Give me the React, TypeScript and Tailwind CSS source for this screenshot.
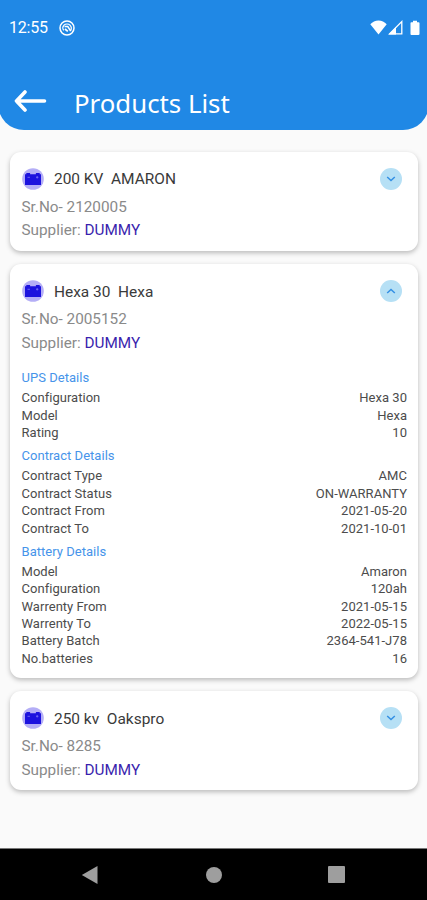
import { useState } from "react"
import clsx from "clsx"

interface Section {
  title: string
  rows: [string, string][]
}

interface Product {
  name: string
  serial: string
  supplier: string
  sections?: Section[]
}

const products: Product[] = [
  { name: "200 KV  AMARON", serial: "2120005", supplier: "DUMMY" },
  {
    name: "Hexa 30  Hexa",
    serial: "2005152",
    supplier: "DUMMY",
    sections: [
      {
        title: "UPS Details",
        rows: [
          ["Configuration", "Hexa 30"],
          ["Model", "Hexa"],
          ["Rating", "10"],
        ],
      },
      {
        title: "Contract Details",
        rows: [
          ["Contract Type", "AMC"],
          ["Contract Status", "ON-WARRANTY"],
          ["Contract From", "2021-05-20"],
          ["Contract To", "2021-10-01"],
        ],
      },
      {
        title: "Battery Details",
        rows: [
          ["Model", "Amaron"],
          ["Configuration", "120ah"],
          ["Warrenty From", "2021-05-15"],
          ["Warrenty To", "2022-05-15"],
          ["Battery Batch", "2364-541-J78"],
          ["No.batteries", "16"],
        ],
      },
    ],
  },
  { name: "250 kv  Oakspro", serial: "8285", supplier: "DUMMY" },
]

function StatusBar() {
  return (
    <div className="flex h-[55px] items-center pl-[9px] pr-[7px] text-white">
      <span className="pt-px text-[16px] tracking-[-0.2px]">12:55</span>
      <svg className="ml-[11px]" width="16" height="16" viewBox="0 0 16 16" fill="none" stroke="currentColor">
        <circle cx="8" cy="8" r="7" strokeWidth="1.5" />
        <path d="M4.700 10.300A4 4 0 0 1 5 5.200C6.500 3.600 9.500 3.600 11 5.200s1.500 4 .5 5.600" strokeWidth="1.2" />
        <path d="M5.600 6.600h3.200l2.900 4.600" strokeWidth="1.5" />
        <path d="M6 9l2.800 2.400" strokeWidth="1.700" />
      </svg>
      <svg className="ml-auto" width="17" height="15" viewBox="0 0 17 15" fill="currentColor">
        <path d="M8.5 14.5L.3 4.3C2.5 2 5.3.6 8.5.6s6 1.4 8.2 3.7z" />
      </svg>
      <svg className="ml-px" width="15" height="15" viewBox="0 0 15 15">
        <path d="M13.8 1.6v12.2H1.6z" fill="none" stroke="currentColor" strokeWidth="1.3" />
        <path d="M8 7v7.400H.6z" fill="currentColor" />
      </svg>
      <svg className="ml-[7px]" width="10" height="16" viewBox="0 0 10 16" fill="currentColor">
        <path d="M3 .8h4v1.4h1.6c.5 0 .9.4.9.9V14c0 .5-.4.9-.9.9H1.4a.9.9 0 0 1-.9-.9V3.100c0-.5.4-.9.9-.9H3z" />
      </svg>
    </div>
  )
}

function BatteryIcon() {
  return (
    <svg width="22" height="22" viewBox="0 0 22 22" className="shrink-0">
      <circle cx="11" cy="11" r="10.8" fill="#b4aef6" />
      <path d="M4.300 5h3.800v1.300h5.800V5h3.800v1.300h1.300v10.700H3V6.300h1.300z" fill="#1c12de" />
      <path d="M5.500 9.300h2.400M14 9.300h2.400M15.200 8.100v2.400" stroke="#7f78f2" strokeWidth="0.8" />
    </svg>
  )
}

function ProductCard({ product }: { product: Product }) {
  const [open, setOpen] = useState(!!product.sections)

  return (
    <div
      className={clsx(
        "rounded-[11px] bg-white pl-[11.500px] pr-[10.500px] pt-[16px] shadow-[0_2px_5px_rgba(0,0,0,0.26)]",
        open ? "pb-[10.200px]" : "pb-[8px]"
      )}
    >
      <div className="flex h-[22px] items-center">
        <BatteryIcon />
        <h2 className="ml-[10.500px] whitespace-pre pt-[3px] text-[15.450px] text-[#3a3a3a]">{product.name}</h2>
        <button
          onClick={() => setOpen(!open)}
          className="ml-auto mr-[5.500px] flex size-[22px] items-center justify-center rounded-full bg-[#b6e0f5]"
        >
          <svg
            width="10"
            height="6"
            viewBox="0 0 10 6"
            fill="none"
            stroke="#3490e4"
            strokeWidth="1.5"
            className={open ? "rotate-180" : ""}
          >
            <path d="M1.200 1L5 4.500 8.800 1" />
          </svg>
        </button>
      </div>
      <div className="mt-[6px] text-[15.300px] leading-[23.500px] text-[#8a8a8a]">
        <p>Sr.No- {product.serial}</p>
        <p>
          Supplier: <span className="text-[#3b1fae]">{product.supplier}</span>
        </p>
      </div>
      {open && product.sections && (
        <div className="mt-[8.500px] text-[13px] leading-[17.430px] tracking-[0.030px] text-[#4c4c4c]">
          {product.sections.map((section) => (
            <section key={section.title}>
              <h3 className="pb-[2.700px] pt-[5.600px] text-[#4694ea]">{section.title}</h3>
              {section.rows.map(([label, value]) => (
                <div key={label} className="flex justify-between">
                  <span>{label}</span>
                  <span>{value}</span>
                </div>
              ))}
            </section>
          ))}
        </div>
      )}
    </div>
  )
}

export default function App() {
  return (
    <div className="flex h-[900px] w-[427px] flex-col overflow-hidden bg-[#fafafa] font-['Roboto',sans-serif]">
      <div className="-mx-[2px] h-[129.500px] shrink-0 rounded-b-[26px] bg-[#2088e5] px-[2px]">
        <StatusBar />
        <div className="flex items-start pl-[14px] pt-[30px] text-white">
          <svg
            className="mt-[5px]"
            width="33"
            height="22"
            viewBox="0 0 33 22"
            fill="none"
            stroke="currentColor"
            strokeWidth="3.600"
            strokeLinecap="round"
            strokeLinejoin="round"
          >
            <path d="M2.500 11H30.500M11 2L2.500 11l8.500 9" />
          </svg>
          <h1 className="ml-[27px] font-['Noto_Sans',sans-serif] text-[25.800px] leading-[36px]">Products List</h1>
        </div>
      </div>

      <main className="flex flex-1 flex-col gap-[13.500px] pl-[10px] pr-[9.500px] pt-[22px]">
        {products.map((product) => (
          <ProductCard key={product.name} product={product} />
        ))}
      </main>

      <nav className="flex h-[52px] shrink-0 items-center border-t border-[#777] bg-black pl-[81px] text-[#9e9e9e]">
        <svg width="18" height="20" viewBox="0 0 18 20" fill="currentColor">
          <path d="M.8 10L16.500 1v18z" />
        </svg>
        <div className="ml-[107px] size-[16px] rounded-full bg-[#9e9e9e]" />
        <div className="ml-[106px] size-[17px] rounded-[1px] bg-[#9e9e9e]" />
      </nav>
    </div>
  )
}
